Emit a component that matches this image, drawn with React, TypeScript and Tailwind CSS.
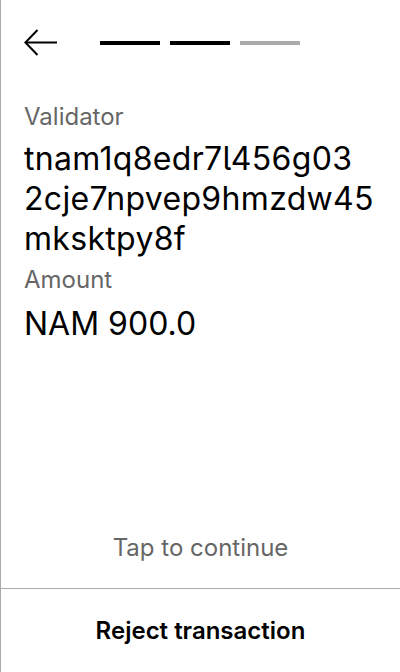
import { useState } from 'react'

const Progress = ({ step, total }: { step: number; total: number }) => {
    return (
        <div className="flex gap-[10px]">
            {Array.from({ length: total }).map((_, i) => (
                <div key={i} className={i < step ? 'w-[60px] h-[4px] bg-black' : 'w-[60px] h-[4px] bg-[#aaaaaa]'} />
            ))}
        </div>
    )
}

const addressLines = ['tnam1q8edr7l456g03', '2cje7npvep9hmzdw45', 'mksktpy8f']

const App = () => {
    const [tapped, setTapped] = useState(false)
    return (
        <div
            className="h-[672px] w-[400px] bg-white border-l border-[#aaaaaa] flex flex-col text-black"
            style={{ fontFamily: 'Inter, "Noto Sans", sans-serif' }}
        >
            {/* header */}
            <div className="flex items-center gap-[43px] px-[23px] h-[86px]">
                <button className="w-[33px] h-[28px] flex items-center" aria-label="Back">
                    <svg width="33" height="28" viewBox="0 0 33 28" fill="none" stroke="black" strokeWidth="2">
                        <path d="M13.5 1 L1.4 13.5 L13.5 26" />
                        <path d="M1.4 13.5 H33" />
                    </svg>
                </button>
                <Progress step={2} total={3} />
            </div>
            <div className="flex-1 px-[23px] pt-[15px]" onClick={() => setTapped(!tapped)}>
                <p className="text-[24px] leading-[32px] text-[#666666]">Validator</p>
                <p className="text-[32px] leading-[40px] mt-[6px] tracking-[0.01em] [font-feature-settings:'cv05']">
                    {addressLines.map((line) => (
                        <span key={line} className="block">{line}</span>
                    ))}
                </p>
                <p className="text-[24px] leading-[32px] text-[#666666] mt-[5px]">Amount</p>
                <p className="text-[32px] leading-[40px] mt-[8px]">NAM 900.0</p>
            </div>
            <p className="text-center text-[24px] leading-[32px] text-[#666666] pb-[24px]">Tap to continue</p>
            <button className="border-t border-[#aaaaaa] h-[84px] text-[24px] font-semibold text-center">
                Reject transaction
            </button>
        </div>
    )
}
export default App
